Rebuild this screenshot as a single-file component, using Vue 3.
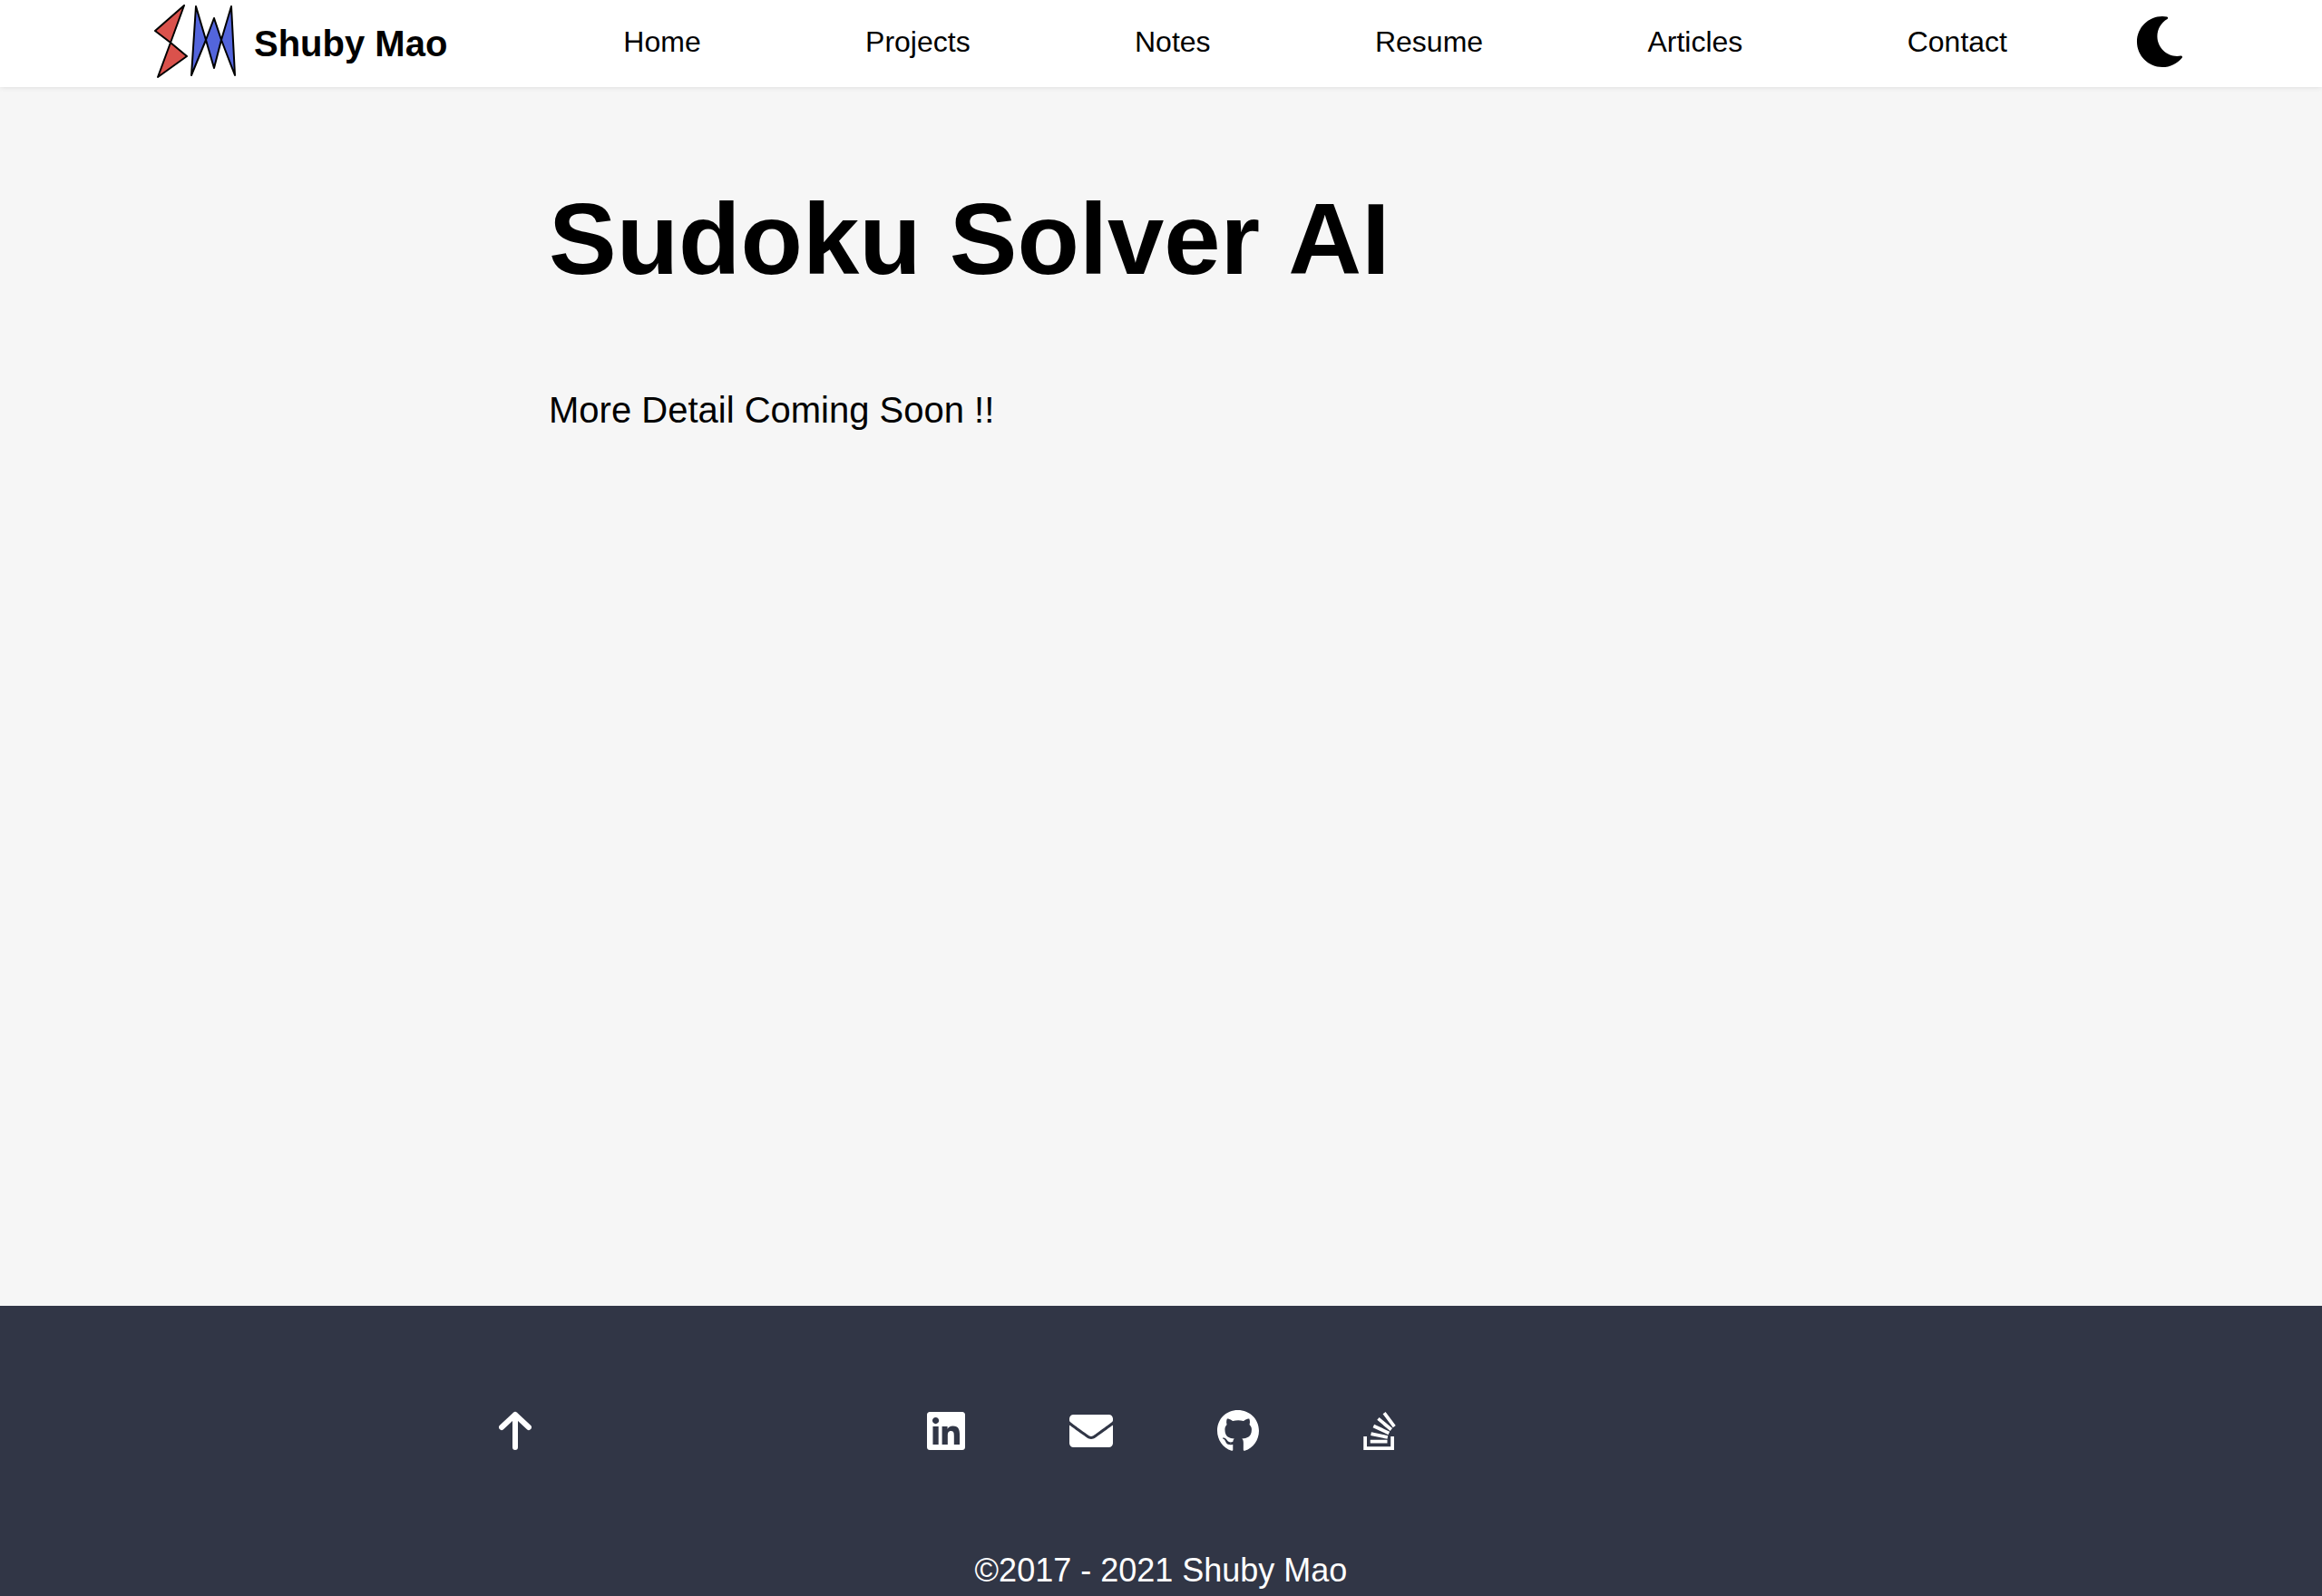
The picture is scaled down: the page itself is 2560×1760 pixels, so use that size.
<script setup>
const links = ['Home', 'Projects', 'Notes', 'Resume', 'Articles', 'Contact']

const socials = [
  {
    name: 'LinkedIn',
    size: 'w42',
    box: '0 0 448 512',
    d: 'M416 32H31.9C14.3 32 0 46.5 0 64.3v383.4C0 465.5 14.3 480 31.9 480H416c17.6 0 32-14.5 32-32.3V64.3c0-17.8-14.4-32.3-32-32.3zM135.4 416H69V202.2h66.5V416zm-33.2-243c-21.3 0-38.5-17.3-38.5-38.5S80.9 96 102.2 96c21.2 0 38.5 17.3 38.5 38.5 0 21.3-17.2 38.5-38.5 38.5zm282.1 243h-66.4V312c0-24.8-.5-56.7-34.5-56.7-34.6 0-39.9 27-39.9 54.9V416h-66.4V202.2h63.7v29.2h.9c8.9-16.8 30.6-34.5 62.9-34.5 67.2 0 79.7 44.3 79.7 101.9V416z'
  },
  {
    name: 'Email',
    size: 'w48',
    box: '0 0 512 512',
    d: 'M502.3 190.8c3.9-3.1 9.7-.2 9.7 4.7V400c0 26.5-21.5 48-48 48H48c-26.5 0-48-21.5-48-48V195.6c0-5 5.7-7.8 9.7-4.7 22.4 17.4 52.1 39.5 154.1 113.6 21.1 15.4 56.7 47.8 92.2 47.6 35.7.3 72-32.8 92.3-47.6 102-74.1 131.6-96.3 154-113.7zM256 320c23.2.4 56.6-29.2 73.4-41.4 132.7-96.3 142.8-104.7 173.4-128.7 5.8-4.5 9.2-11.5 9.2-18.9v-19c0-26.5-21.5-48-48-48H48c-26.5 0-48 21.5-48 48v19c0 7.4 3.4 14.3 9.2 18.9 30.6 23.9 40.7 32.4 173.4 128.7 16.8 12.2 50.2 41.8 73.4 41.4z'
  },
  {
    name: 'GitHub',
    size: 'w46',
    box: '0 0 496 512',
    d: 'M165.9 397.4c0 2-2.3 3.6-5.2 3.6-3.3.3-5.6-1.3-5.6-3.6 0-2 2.3-3.6 5.2-3.6 3-.3 5.6 1.3 5.6 3.6zM244.8 8C106.1 8 0 113.3 0 252c0 110.9 69.8 205.8 169.5 239.2 12.8 2.3 17.3-5.6 17.3-12.1 0-6.2-.3-40.4-.3-61.4 0 0-70 15-84.7-29.8 0 0-11.4-29.1-27.8-36.6 0 0-22.9-15.7 1.6-15.4 0 0 24.9 2 38.6 25.8 21.9 38.6 58.6 27.5 72.9 20.9 2.3-16 8.8-27.1 16-33.7-55.9-6.2-112.3-14.3-112.3-110.5 0-27.5 7.6-41.3 23.6-58.9-2.6-6.5-11.1-33.3 2.6-67.9 20.9-6.5 69 27 69 27 20-5.6 41.5-8.5 62.8-8.5s42.8 2.9 62.8 8.5c0 0 48.1-33.6 69-27 13.7 34.7 5.2 61.4 2.6 67.9 16 17.7 25.8 31.5 25.8 58.9 0 96.5-58.9 104.2-114.8 110.5 9.2 7.9 17 22.9 17 46.4 0 33.7-.3 75.4-.3 83.6 0 6.5 4.6 14.4 17.3 12.1C428.2 457.8 496 362.9 496 252 496 113.3 383.5 8 244.8 8z'
  },
  {
    name: 'Stack Overflow',
    size: 'w36',
    box: '0 0 384 512',
    d: 'M290.7 311L95 269.7 86.8 309l195.7 41zm51-87L188.2 95.7l-25.5 30.8 153.5 128.3zm-31.2 39.7L129.2 179l-16.7 36.5L293.7 300zM262 32l-32 24 119.3 160.3 32-24zm20.5 328h-200v39.7h200zm39.7 80H42.7V320h-40v160h359.5V320h-40z'
  }
]

const toTop = () => window.scrollTo({ top: 0, behavior: 'smooth' })
</script>

<template>
  <div class="page">
    <header class="bar">
      <a class="brand" href="#">
        <svg class="logo" viewBox="0 0 92 84" aria-hidden="true">
          <g stroke="#000" stroke-width="2" stroke-linejoin="round">
            <path fill="#da524c" d="M33 2 1 30 18 43zM18 43 36 58 4 81z" />
            <path fill="#5365dc" d="M46 3 57 40 41 79zM85 3 74 40 89 79zM66 16 74 40 66 71 57 40z" />
          </g>
        </svg>
        <span>Shuby Mao</span>
      </a>
      <nav class="nav">
        <a v-for="l in links" :key="l" href="#">{{ l }}</a>
      </nav>
      <button class="theme" type="button" aria-label="Toggle dark mode">
        <svg viewBox="0 0 512 512" aria-hidden="true">
          <path d="M283.211 512c78.962 0 151.079-35.925 198.857-94.792 7.068-8.708-.639-21.43-11.562-19.35-124.203 23.654-238.262-71.576-238.262-196.954 0-72.222 38.662-138.635 101.498-174.394 9.686-5.512 7.25-20.197-3.756-22.23A258.156 258.156 0 0 0 283.211 0c-141.309 0-256 114.511-256 256 0 141.309 114.511 256 256 256z" />
        </svg>
      </button>
    </header>

    <main class="content">
      <h1>Sudoku Solver AI</h1>
      <p>More Detail Coming Soon !!</p>
    </main>

    <footer class="footer">
      <div class="row">
        <button class="top" type="button" aria-label="Back to top" @click="toTop">
          <svg viewBox="0 0 36 48" aria-hidden="true">
            <path d="M18 42V6M3 20 18 6l15 14" fill="none" stroke="#fff" stroke-width="6" stroke-linecap="round" stroke-linejoin="round" />
          </svg>
        </button>
        <div class="socials">
          <a v-for="s in socials" :key="s.name" href="#" :aria-label="s.name">
            <svg :class="s.size" :viewBox="s.box" aria-hidden="true"><path :d="s.d" /></svg>
          </a>
        </div>
      </div>
      <p class="copy">©2017 - 2021 Shuby Mao</p>
    </footer>
  </div>
</template>

<style>
body {
  margin: 0;
  background: #f6f6f6;
}
</style>

<style scoped>
.page {
  display: flex;
  flex-direction: column;
  min-height: 100vh;
  color: #000;
  font-family: "Liberation Sans", Arial, sans-serif;
}
a {
  color: inherit;
  text-decoration: none;
}
svg {
  display: block;
}
button {
  padding: 0;
  border: 0;
  background: none;
  cursor: pointer;
}
.bar {
  display: flex;
  align-items: center;
  box-sizing: border-box;
  height: 96px;
  padding: 0 151px 4px 170px;
  background: #fff;
  box-shadow: 0 0 6px rgba(0, 0, 0, 0.12);
}
.brand {
  display: flex;
  align-items: center;
  gap: 18px;
  font-size: 40px;
  line-height: 48px;
  font-weight: 700;
}
.brand span {
  padding-top: 4px;
}
.logo {
  width: 92px;
  height: 84px;
}
.nav {
  display: flex;
  flex: 1;
  justify-content: space-between;
  margin: 0 140px 0 194px;
  font-size: 32px;
  line-height: 36px;
}
.theme svg {
  width: 56px;
  height: 56px;
}
.content {
  flex: 1;
  padding: 104px 605px 0;
}
h1 {
  margin: 0;
  font-size: 112px;
  line-height: 128px;
  font-kerning: none;
}
.content p {
  margin: 100px 0 0;
  font-size: 40px;
  line-height: 48px;
}
.footer {
  height: 320px;
  background: #313646;
  color: #fff;
}
.row {
  display: grid;
  grid-template-columns: 1fr auto 1fr;
  align-items: center;
  padding: 114px 550px 0;
}
.top {
  justify-self: start;
}
.top svg {
  width: 36px;
  height: 48px;
}
.socials {
  display: flex;
  gap: 115px;
}
.socials svg {
  height: 48px;
  fill: #fff;
}
.w36 { width: 36px; }
.w42 { width: 42px; }
.w46 { width: 46px; }
.w48 { width: 48px; }
.copy {
  margin: 108px 0 0;
  font-size: 36px;
  line-height: 44px;
  text-align: center;
}
</style>
